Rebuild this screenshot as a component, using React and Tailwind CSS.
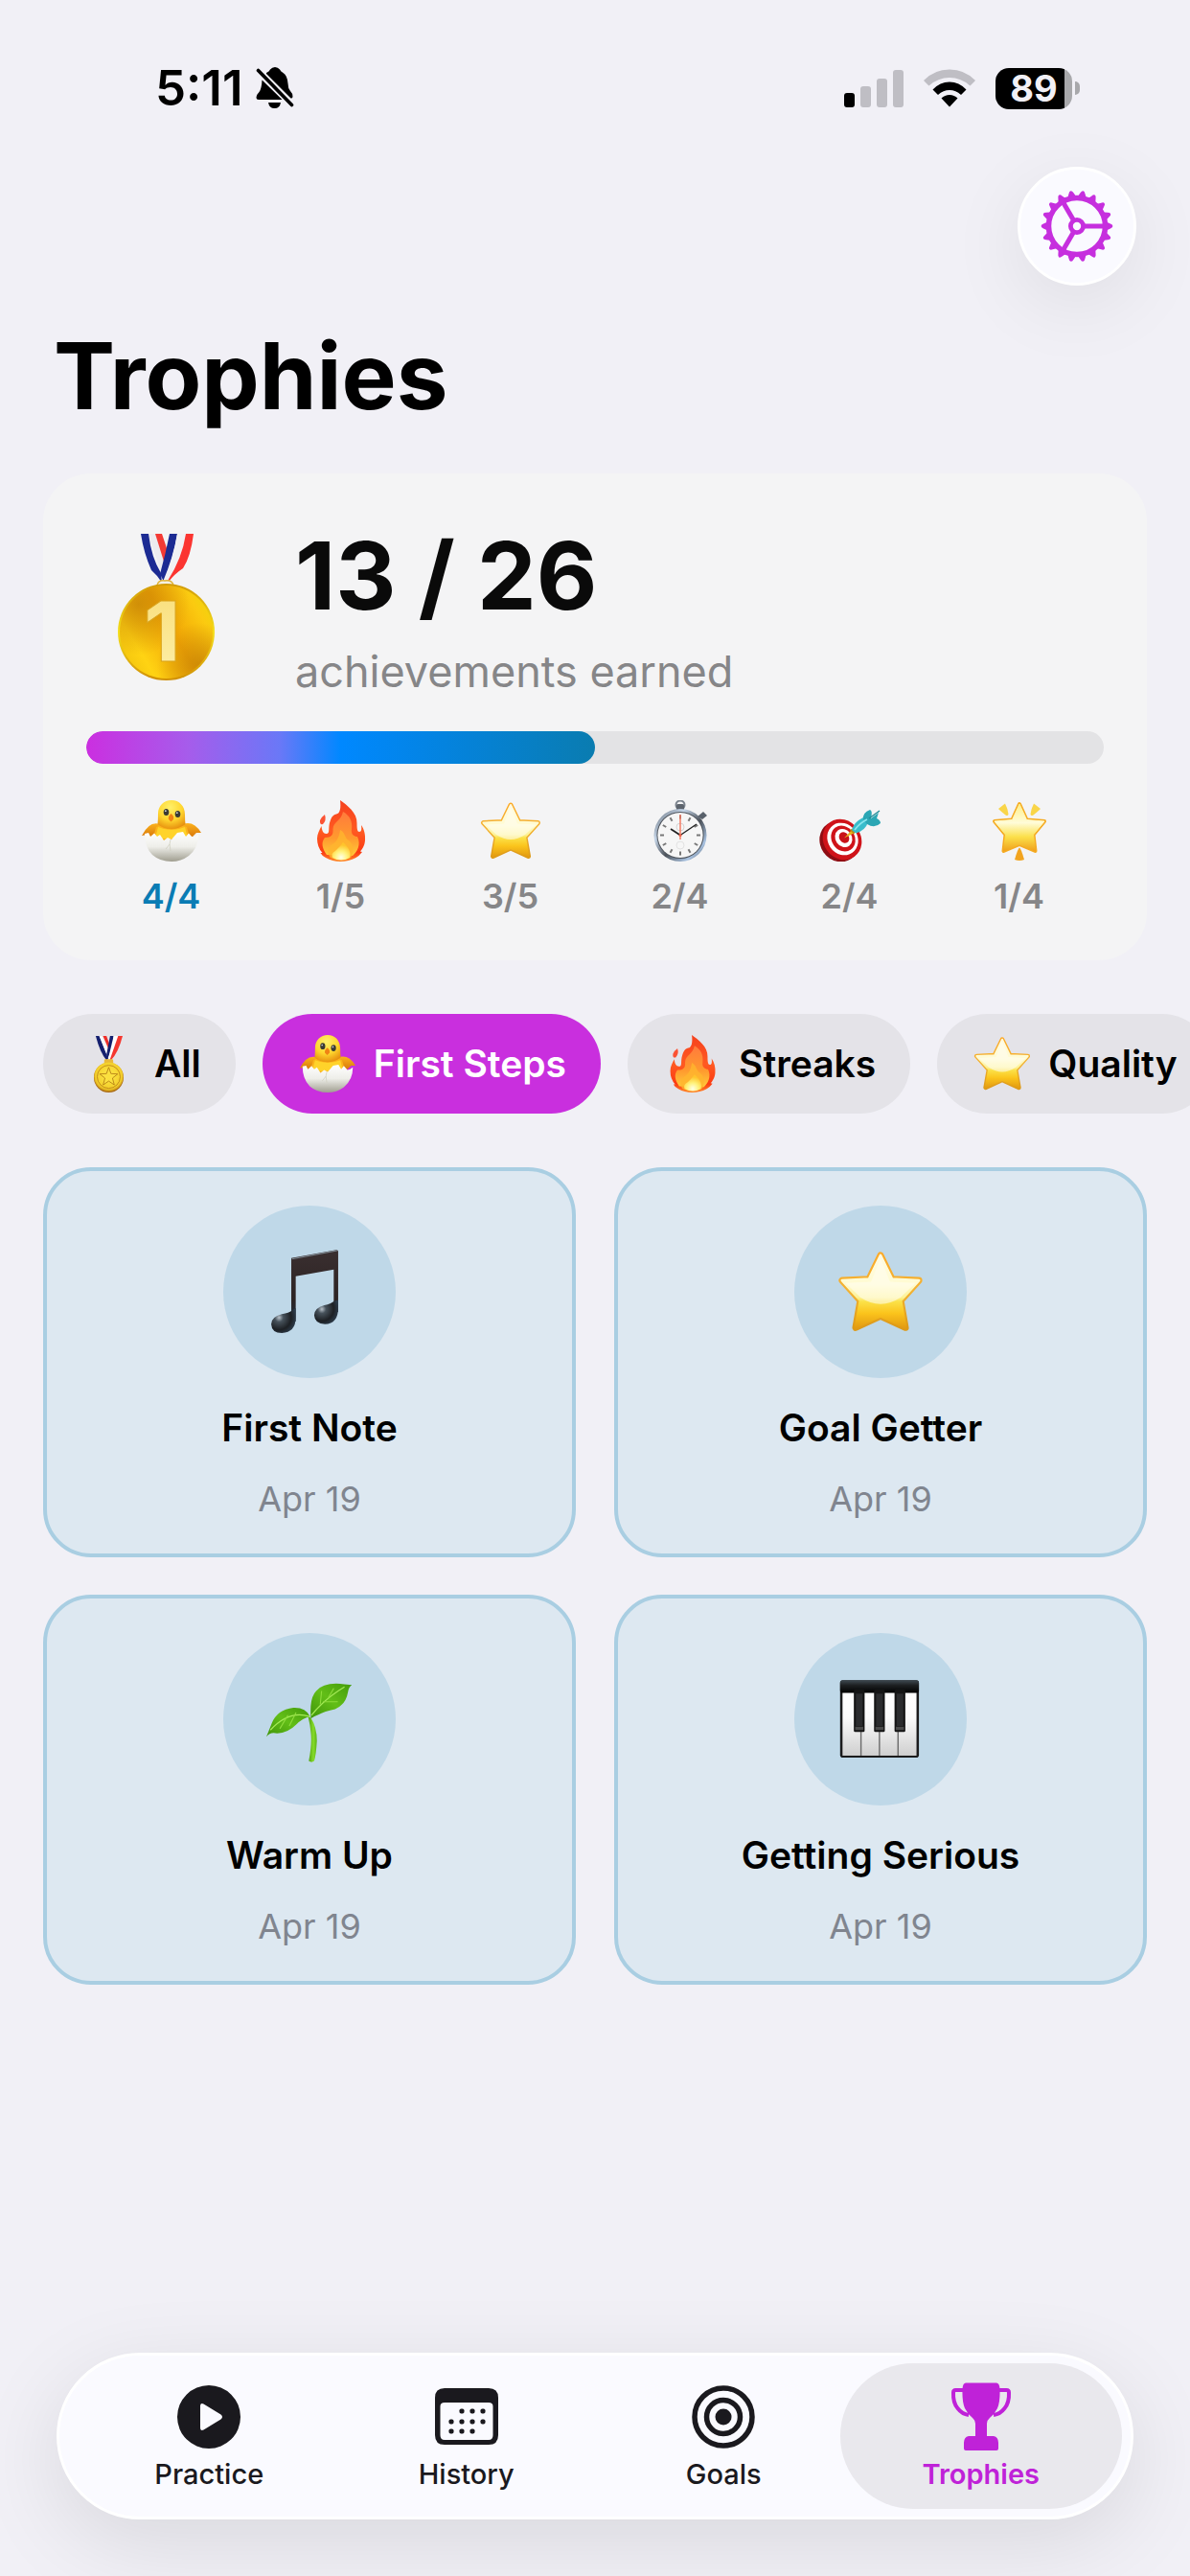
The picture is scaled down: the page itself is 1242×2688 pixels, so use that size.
import { useState } from "react";

const STAR = "M32 5 L40.5 22.5 L60.5 23.5 L47 38.5 L50.5 58.5 L32 50 L13.5 58.5 L17 38.5 L3.5 23.5 L23.5 22.5 Z";

function Star({ className }) {
    return (
        <svg viewBox="0 0 64 64" className={className} aria-hidden="true">
            <defs>
                <linearGradient id="starFill" x1="0" y1="0" x2="0" y2="1">
                    <stop offset="0" stopColor="#fffbe0" />
                    <stop offset=".4" stopColor="#fffbd2" />
                    <stop offset=".58" stopColor="#fdf296" />
                    <stop offset=".64" stopColor="#fbe148" />
                    <stop offset=".8" stopColor="#fbc41c" />
                    <stop offset="1" stopColor="#e39c12" />
                </linearGradient>
                <linearGradient id="starEdge" x1="0" y1="0" x2="0" y2="1">
                    <stop offset="0" stopColor="#fbaa28" />
                    <stop offset=".5" stopColor="#f2b233" />
                    <stop offset="1" stopColor="#dd9a18" />
                </linearGradient>
            </defs>
            <path d={STAR} fill="url(#starEdge)" stroke="url(#starEdge)" strokeWidth="5" strokeLinejoin="round" />
            <path d={STAR} fill="url(#starFill)" stroke="url(#starFill)" strokeWidth="2" strokeLinejoin="round" />
            <path d="M32 7 L39 24.5 L58 25.500 L47 36 Q32 46 17 36 L6 25.500 L25 24.5 Z" fill="#fffef0" opacity=".6" />
        </svg>
    );
}

function GlowStar({ className }) {
    return (
        <svg viewBox="0 0 64 64" className={className} aria-hidden="true">
            <defs>
                <linearGradient id="glowFill" x1="0" y1="0" x2="0" y2="1">
                    <stop offset="0" stopColor="#fff08a" />
                    <stop offset=".4" stopColor="#fffcd8" />
                    <stop offset=".7" stopColor="#fbe04a" />
                    <stop offset="1" stopColor="#f0a11c" />
                </linearGradient>
            </defs>
            <path d="M32 4 L39.5 20.500 L58 22 L46.500 36 L48.500 53 L32 46 L15.5 53 L17.500 36 L6 22 L24.500 20.500 Z" fill="#f5ab22" stroke="#f5ab22" strokeWidth="4" strokeLinejoin="round" />
            <path d="M32 4 L39.5 20.500 L58 22 L46.500 36 L48.500 53 L32 46 L15.5 53 L17.500 36 L6 22 L24.500 20.500 Z" fill="url(#glowFill)" stroke="url(#glowFill)" strokeWidth="1" strokeLinejoin="round" />
            <path d="M10 9 L17 3.500 Q19.500 8 20.500 14.500 Q20 17 17.500 15.500 Q13 12 10 9 Z" fill="#f9d548" />
            <path d="M54 9 L47 3.500 Q44.500 8 43.500 14.500 Q44 17 46.500 15.500 Q51 12 54 9 Z" fill="#f9d548" />
            <path d="M32 49.500 Q33.500 50 37 62 Q32 64 27 62 Q30.500 50 32 49.500 Z" fill="#f2a41f" />
        </svg>
    );
}

function Chick({ className }) {
    return (
        <svg viewBox="0 0 64 64" className={className} aria-hidden="true">
            <defs>
                <radialGradient id="chickHead" cx=".45" cy=".25" r=".8">
                    <stop offset="0" stopColor="#fff06a" />
                    <stop offset=".55" stopColor="#ffd62e" />
                    <stop offset="1" stopColor="#e58a0c" />
                </radialGradient>
                <linearGradient id="chickWing" x1="0" y1="0" x2="0" y2="1">
                    <stop offset="0" stopColor="#fcb21c" />
                    <stop offset="1" stopColor="#d9790b" />
                </linearGradient>
                <linearGradient id="shell" x1="0" y1="0" x2="0" y2="1">
                    <stop offset="0" stopColor="#ffffff" />
                    <stop offset=".5" stopColor="#eeeee9" />
                    <stop offset="1" stopColor="#a09e90" />
                </linearGradient>
            </defs>
            <path d="M20 25 Q9 21 1 37 L6 36 L10 38 L20 37 Z" fill="url(#chickWing)" />
            <path d="M44 25 Q55 21 63 34 L58 34 L54 38 L44 37 Z" fill="url(#chickWing)" />
            <path d="M16 28 Q32 20 48 28 L52 42 L12 42 Z" fill="#fbb41b" />
            <path d="M32 0 C40 0 46 6 46 15 Q46 21 46.500 25 Q40 30 32 30 Q23 30 17.500 25 Q18 20 18 14 C18 6 24 0 32 0 Z" fill="url(#chickHead)" />
            <path d="M18 28 Q32 34 46 28 L49 40 L15 40 Z" fill="#ffd32a" />
            <ellipse cx="26.500" cy="12.500" rx="2.800" ry="3.600" fill="#3a3a34" />
            <ellipse cx="38.500" cy="14.500" rx="2.800" ry="3.600" fill="#3a3a34" />
            <circle cx="25.800" cy="11.200" r=".9" fill="#cfd3da" />
            <circle cx="37.800" cy="13.200" r=".9" fill="#cfd3da" />
            <path d="M31.500 14 Q35 16.500 34 20 L31.500 22.500 L29 20 Q28 17 31.500 14 Z" fill="#f08314" />
            <path d="M4 35 L8 34 L10 38 L14 34.500 L17 38 L20 36 L24 42 L28 39 L32 41 L38 34 L44 33 L47 38 L50 34.500 L54 39 L57 38 L60 36 Q60 50 50 58 Q42 64 32 64 Q20 64 12 57 Q4 49 4 35 Z" fill="url(#shell)" />
            <path d="M31 41 L30 46 L26 51 M30 46 L31 53" fill="none" stroke="#cfcfc0" strokeWidth=".8" />
        </svg>
    );
}

function Fire({ className }) {
    return (
        <svg viewBox="0 0 64 64" className={className} aria-hidden="true">
            <defs>
                <linearGradient id="fireOuter" x1="0" y1="0" x2="0" y2="1">
                    <stop offset="0" stopColor="#f5401d" />
                    <stop offset=".5" stopColor="#ff5a22" />
                    <stop offset=".85" stopColor="#fb3b12" />
                    <stop offset="1" stopColor="#ff8a2a" />
                </linearGradient>
                <linearGradient id="fireMid" x1="0" y1="0" x2="0" y2="1">
                    <stop offset="0" stopColor="#ff7a3c" />
                    <stop offset=".6" stopColor="#ff9a2e" />
                    <stop offset="1" stopColor="#ffc93a" />
                </linearGradient>
                <radialGradient id="fireCore" cx=".5" cy=".85" r=".7">
                    <stop offset="0" stopColor="#ffffe6" />
                    <stop offset=".5" stopColor="#fff27a" />
                    <stop offset="1" stopColor="#ffc42c" />
                </radialGradient>
            </defs>
            <path d="M31 0 C38 5 49 13 48.500 24 C48.500 30 49 33 51 33 C53.500 33 53.500 30 53 26 C56 30 57.500 36 57 42 C56.500 48 54 51 52 53.500 L54 54 Q51 58 47.500 60 Q40 64 31 64 Q23 64 16 60 Q12 58 10.500 55 L12.500 55 Q7 49 7 40 C7 35 9.500 31 11.500 27 C12 32 13.500 35 16.500 35 C21 35 18 29 20.500 22 C22.500 16 25 15 27 14.500 C31 14 32 8 31 0 Z" fill="url(#fireOuter)" />
            <path d="M15 15 Q17 21 13 25 Q9.500 26 10 21 Q11 18 15 15 Z" fill="#fb5233" />
            <path d="M34 12 C41 16 44 22 43 30 C42 36 46 38 49 38 C53 46 49 54 44 58 L17 57 C12 50 11 44 15 39 C22 39 24 36 23.500 30 C24 22 32 22 34 12 Z" fill="url(#fireMid)" />
            <path d="M31 31 C36 33 36 40 40 42 C45 46 46 54 42 60 Q32 65 21 60 C16 54 19 48 23 46 C28 43 30 38 31 31 Z" fill="#ffb52e" opacity=".8" />
            <path d="M34 44 C39 48 43 54 41 60 Q32 65 23 60 C21 55 25 54 27 52 C30 49 31 48 34 44 Z" fill="url(#fireCore)" />
        </svg>
    );
}

function Stopwatch({ className }) {
    const ticks = [0, 30, 60, 90, 120, 150, 180, 210, 240, 270, 300, 330];
    return (
        <svg viewBox="0 0 64 64" className={className} aria-hidden="true">
            <defs>
                <linearGradient id="steel" x1="0" y1="0" x2="1" y2="1">
                    <stop offset="0" stopColor="#5f6873" />
                    <stop offset=".3" stopColor="#c5d5e8" />
                    <stop offset=".55" stopColor="#4c525a" />
                    <stop offset=".8" stopColor="#a9c3e2" />
                    <stop offset="1" stopColor="#3f444b" />
                </linearGradient>
            </defs>
            <circle cx="32" cy="5" r="4.500" fill="none" stroke="#7b838d" strokeWidth="2" />
            <rect x="28" y="4" width="8" height="7" rx="1.500" fill="#5d646d" />
            <path d="M50 17 L56 12 L60 16 L55 20 Z" fill="#59616b" />
            <circle cx="32" cy="36.500" r="27.500" fill="url(#steel)" />
            <circle cx="32" cy="36.500" r="24.600" fill="#4f555d" />
            <circle cx="32" cy="36.500" r="23.600" fill="#f6f6f6" />
            {ticks.map((a) => (
                <rect key={a} x="31" y="15.500" width="2" height="4" fill="#777" transform={`rotate(${a} 32 36.500)`} />
            ))}
            <circle cx="32" cy="28" r="4" fill="none" stroke="#ccc" strokeWidth=".8" />
            <circle cx="32" cy="47" r="4" fill="none" stroke="#ddd" strokeWidth=".8" />
            <path d="M32 36.500 L22 30" stroke="#222" strokeWidth="1.800" />
            <path d="M32 36.500 L49 25" stroke="#222" strokeWidth="1.400" />
            <path d="M32 41 L32 15" stroke="#f4745c" strokeWidth="1.400" />
            <circle cx="32" cy="36.500" r="1.600" fill="#e7664e" />
        </svg>
    );
}

function Dart({ className }) {
    return (
        <svg viewBox="0 0 64 64" className={className} aria-hidden="true">
            <ellipse cx="21" cy="43" rx="20" ry="22" fill="#8e0d13" transform="rotate(-35 21 43)" />
            <ellipse cx="24" cy="41" rx="19.500" ry="22" fill="#cf1319" transform="rotate(-35 24 41)" />
            <ellipse cx="24.500" cy="40.500" rx="15.500" ry="17.500" fill="#fff" transform="rotate(-35 24.500 40.500)" />
            <ellipse cx="25" cy="40" rx="12" ry="14" fill="#cf1319" transform="rotate(-35 25 40)" />
            <ellipse cx="25.500" cy="39.500" rx="8.500" ry="10" fill="#fff" transform="rotate(-35 25.500 39.500)" />
            <ellipse cx="26" cy="39" rx="5" ry="6" fill="#c81218" transform="rotate(-35 26 39)" />
            <path d="M26 39.500 L34 31 L37 34 Z" fill="#e8b21d" />
            <path d="M32 31 L36 35.500 L38 33 L34.500 29.500 Z" fill="#b98a12" />
            <path d="M34 31 Q36 23 46 18 L51 23 Q48 32 38 34.500 Z" fill="#39bccb" />
            <path d="M46 20 Q45 13 53 10 Q56 11 54 19 L62 13 L60 19 Q64 21 64 24 Q58 30 50 25 Z" fill="#2ba6b4" />
            <path d="M37 31 Q42 24 50 20" stroke="#8ae6ee" strokeWidth="1.800" fill="none" />
            <path d="M52 19 L63 11" stroke="#1f8a96" strokeWidth="1.200" />
        </svg>
    );
}

function SportsMedal({ className }) {
    return (
        <svg viewBox="0 0 64 64" className={className} aria-hidden="true">
            <defs>
                <radialGradient id="smallGold" cx=".5" cy=".45" r=".6">
                    <stop offset="0" stopColor="#ffe94a" />
                    <stop offset=".75" stopColor="#f3cf2b" />
                    <stop offset="1" stopColor="#b9790f" />
                </radialGradient>
            </defs>
            <path d="M24 1 L29 1 L37 24 L33 27 Z" fill="#f5f5f5" />
            <path d="M26 1 L30 1 L34 12 L33 17 Z" fill="#ee2f2a" />
            <path d="M18 1 L22 1 L32 26 L30 28 Q23 20 18 1 Z" fill="#15206f" />
            <path d="M22 1 L24 1 L33 23 L32 26 Z" fill="#fff" />
            <path d="M34 1 L38 1 Q37 15 31 27 L30 22 Z" fill="#15206f" />
            <path d="M38 1 L43 1 Q40 17 33 27 L32 26 Z" fill="#fff" />
            <path d="M43 1 L48 1 Q43 20 35 28 L34 27 Z" fill="#f5372f" />
            <rect x="27.500" y="27" width="10" height="5" rx="1.500" fill="#e9b93a" />
            <circle cx="32.500" cy="47.500" r="16.500" fill="#a96a13" />
            <circle cx="32.500" cy="46.500" r="16.200" fill="url(#smallGold)" />
            <circle cx="32.500" cy="46.500" r="12.800" fill="none" stroke="#c08a1a" strokeWidth="1" />
            <path d="M32.500 36 L35 43 L42.500 43.400 L36.700 48 L38.700 55.500 L32.500 51.300 L26.300 55.500 L28.300 48 L22.500 43.400 L30 43 Z" fill="#fbe03f" stroke="#b98417" strokeWidth="1" strokeLinejoin="round" />
        </svg>
    );
}

function GoldMedal({ className }) {
    return (
        <svg viewBox="0 0 101 153" className={className} aria-hidden="true">
            <defs>
                <linearGradient id="gold" x1="0" y1=".8" x2="1" y2=".2">
                    <stop offset="0" stopColor="#f2c30d" />
                    <stop offset=".2" stopColor="#ffd313" />
                    <stop offset=".55" stopColor="#f2a505" />
                    <stop offset=".85" stopColor="#fbca10" />
                    <stop offset="1" stopColor="#f0d60c" />
                </linearGradient>
                <linearGradient id="goldRim" x1="0" y1="0" x2="0" y2="1">
                    <stop offset="0" stopColor="#d19a06" />
                    <stop offset=".5" stopColor="#f4df1c" />
                    <stop offset="1" stopColor="#d08f05" />
                </linearGradient>
                <radialGradient id="goldShade" cx=".2" cy=".2" r=".55">
                    <stop offset="0" stopColor="#c48206" stopOpacity=".75" />
                    <stop offset="1" stopColor="#c48206" stopOpacity="0" />
                </radialGradient>
                <radialGradient id="goldShade2" cx=".85" cy=".85" r=".45">
                    <stop offset="0" stopColor="#c48206" stopOpacity=".75" />
                    <stop offset="1" stopColor="#c48206" stopOpacity="0" />
                </radialGradient>
                <linearGradient id="numeral" x1="0" y1="0" x2="0" y2="1">
                    <stop offset="0" stopColor="#f9dd78" />
                    <stop offset="1" stopColor="#fdf0aa" />
                </linearGradient>
            </defs>
            <path d="M38 0 L46 0 L56 30 L49 40 Z" fill="#f43a34" />
            <path d="M31 0 L39 0 L49 32 L47 44 Z" fill="#ececf0" />
            <path d="M24 0 L32 0 Q35 25 45 41 L46 51 Q41 43 35 38 Q27 20 24 0 Z" fill="#1c2b93" />
            <path d="M54 0 L62 0 Q58 25 48 50 L44 42 Q50 20 54 0 Z" fill="#1c2b93" />
            <path d="M62 0 L71 0 Q66 28 52 50 L47 50 Q58 24 62 0 Z" fill="#f1f1f4" />
            <path d="M71 0 L79 0 Q76 24 68 36 Q59 42 53 50 L52 49 Q67 26 71 0 Z" fill="#fb3531" />
            <path d="M41 54 Q42 48 49 49 Q57 48 58 54 Z" fill="#f5f1e6" stroke="#e0b53a" strokeWidth="1.500" />
            <circle cx="50.500" cy="102.500" r="50.500" fill="url(#goldRim)" />
            <circle cx="50.500" cy="102.500" r="48.500" fill="url(#gold)" />
            <circle cx="50.500" cy="102.500" r="48.500" fill="url(#goldShade)" />
            <circle cx="50.500" cy="102.500" r="48.500" fill="url(#goldShade2)" />
            <text x="46" y="133" textAnchor="middle" fontFamily="Inter, sans-serif" fontWeight="800" fontSize="86" fill="url(#numeral)" stroke="#d9a41c" strokeWidth="1">1</text>
        </svg>
    );
}

function MusicNotes({ className }) {
    return (
        <svg viewBox="0 0 64 64" className={className} aria-hidden="true">
            <defs>
                <linearGradient id="beam" x1="0" y1="0" x2="0" y2="1">
                    <stop offset="0" stopColor="#3a2f30" />
                    <stop offset=".7" stopColor="#2c2323" />
                    <stop offset="1" stopColor="#1f2f40" />
                </linearGradient>
                <radialGradient id="noteHead" cx=".32" cy=".38" r=".7">
                    <stop offset="0" stopColor="#b9c2ca" />
                    <stop offset=".25" stopColor="#47525b" />
                    <stop offset=".7" stopColor="#1d2024" />
                    <stop offset="1" stopColor="#2c3b4a" />
                </radialGradient>
            </defs>
            <path d="M18.500 7 L52 .8 Q53.300 .8 53.300 2 L53.300 47 L50 47 L50 15.500 L21.800 20.500 L21.800 54 L18.500 54 Z" fill="url(#beam)" />
            <path d="M19 7.600 L52.500 1.300" stroke="#7d8790" strokeWidth=".8" />
            <path d="M18.700 46 Q17 47.500 11.500 48.500 Q3.600 50.500 3.600 56 Q4 62.600 11.500 62.600 Q21.800 62 21.800 51 L21.800 44 Z" fill="url(#noteHead)" />
            <path d="M50.200 39 Q48 41 43 42 Q35.500 44 35.500 49.500 Q36 56 43.500 56 Q53.300 55.500 53.300 44 L53.300 38 Z" fill="url(#noteHead)" />
        </svg>
    );
}

function Seedling({ className }) {
    return (
        <svg viewBox="0 0 64 64" className={className} aria-hidden="true">
            <defs>
                <linearGradient id="leaf" x1="0" y1="1" x2="1" y2="0">
                    <stop offset="0" stopColor="#3f9409" />
                    <stop offset=".5" stopColor="#62be17" />
                    <stop offset="1" stopColor="#439b0b" />
                </linearGradient>
                <linearGradient id="stem" x1="0" y1="0" x2="1" y2="0">
                    <stop offset="0" stopColor="#4a9c0e" />
                    <stop offset=".6" stopColor="#86db2a" />
                    <stop offset="1" stopColor="#5cb316" />
                </linearGradient>
            </defs>
            <path d="M33 31 Q37.500 38 37.500 48 Q37 58 35.500 63 Q33.500 64.500 31.500 63 Q34 50 33 42 Q32.500 36 31 30 Z" fill="url(#stem)" />
            <path d="M32.500 30 Q29 23 20 23.500 Q8 25 4 35 Q2 40 0 45 Q3 41 8 42.500 Q16 42 22 36 Q27 31 32.500 30 Z" fill="url(#leaf)" />
            <path d="M33 30 Q32 16 37 11 Q43 4 58 6 L63.500 6.500 Q61 8 60.500 12 Q59 21 51 24.500 Q43 26 39 28.500 Q35 30 33 31.500 Z" fill="url(#leaf)" />
            <path d="M32 30 Q17 25 3 40" fill="none" stroke="#a5ea57" strokeWidth=".9" />
            <path d="M33.500 29 Q43 17 58 8" fill="none" stroke="#a5ea57" strokeWidth=".9" />
            <path d="M22 27 L17 37 M16 29 L10 39 M40 21 L41 11 M46 16 L50 9 M42 19 L53 19" fill="none" stroke="#8edc3c" strokeWidth=".8" />
        </svg>
    );
}

function Piano({ className }) {
    return (
        <svg viewBox="0 0 64 64" className={className} aria-hidden="true">
            <defs>
                <linearGradient id="ivory" x1="0" y1="0" x2="0" y2="1">
                    <stop offset="0" stopColor="#ffffff" />
                    <stop offset=".4" stopColor="#fbfbfb" />
                    <stop offset="1" stopColor="#cfcfcf" />
                </linearGradient>
                <linearGradient id="lid" x1="0" y1="0" x2="0" y2="1">
                    <stop offset="0" stopColor="#3f4a52" />
                    <stop offset=".4" stopColor="#1d2022" />
                    <stop offset="1" stopColor="#000" />
                </linearGradient>
            </defs>
            <rect x="2" y="3" width="58.500" height="57.500" rx="2" fill="#1b1b1c" />
            <rect x="3.800" y="12" width="54.900" height="47" fill="url(#ivory)" />
            <path d="M17.500 12 V59 M31.200 12 V59 M45 12 V59" stroke="#6b6b6b" strokeWidth="1" />
            <rect x="2" y="3" width="58.500" height="9.500" rx="2" fill="url(#lid)" />
            {[12.200, 27.200, 42.400].map((x) => (
                <g key={x}>
                    <rect x={x} y="10" width="8" height="31.500" rx="1" fill="#141414" />
                    <rect x={x + 1.5} y="13" width="5" height="24" fill="#2b2c2e" />
                    <rect x={x + 1} y="37.500" width="6" height="2.500" fill="#4a4a4a" />
                </g>
            ))}
        </svg>
    );
}

function Gear() {
    const teeth = Array.from({ length: 18 }, (_, i) => i * 20);
    return (
        <svg viewBox="-38 -38 76 76" className="size-[76px]" aria-hidden="true">
            {teeth.map((a) => (
                <path key={a} d="M28 -5.500 Q31 -4.500 35 -2.400 Q37.400 -1.500 37.400 0 Q37.400 1.500 35 2.400 Q31 4.500 28 5.500 Z" fill="#c62fde" transform={`rotate(${a})`} />
            ))}
            <circle r="29.500" fill="none" stroke="#c62fde" strokeWidth="5.500" />
            <circle r="6.600" fill="none" stroke="#c62fde" strokeWidth="4.800" />
            {[0, 120, 240].map((a) => (
                <path key={a} d="M8 0 H29" stroke="#c62fde" strokeWidth="5" transform={`rotate(${a})`} />
            ))}
        </svg>
    );
}

function StatusBar() {
    return (
        <div className="flex h-[60px] items-center justify-between pl-[162px] pr-[115px]">
            <div className="flex items-center gap-[14px]">
                <span className="text-[51px] font-semibold leading-[60px] text-black">5:11</span>
                <svg viewBox="0 0 40 44" className="h-[44px] w-[40px]" aria-label="Silent mode">
                    <path d="M11 6 Q14 4.500 15 2.500 Q17 0 20 0 Q23 0 25 2.500 Q26 4.500 28.500 6 Q33 9 33.500 17 Q33.500 22 36 25 Q39 28 38.500 31 Q38 33 36.500 32.500 L11 7 Z" />
                    <path d="M6.500 13.500 L27.500 34 L3 34 Q.5 34 .5 31.500 Q.5 29 3.500 26 Q6 23 6.500 13.500 Z" />
                    <path d="M13 37 H26 Q25 43 19.500 43 Q14 43 13 37 Z" />
                    <path d="M2.500 3.500 L37.500 39.500" stroke="#000" strokeWidth="3.600" strokeLinecap="round" />
                </svg>
            </div>
            <div className="flex items-center gap-[21px]">
                <svg viewBox="0 0 62 40" className="h-[40px] w-[62px]" aria-label="Signal">
                    <rect x="0" y="25" width="11" height="15" rx="3" fill="#000" />
                    <rect x="17" y="18" width="11" height="22" rx="3" fill="#bfbec4" />
                    <rect x="34" y="10" width="11" height="30" rx="3" fill="#bfbec4" />
                    <rect x="51" y="1" width="11" height="39" rx="3" fill="#bfbec4" />
                </svg>
                <svg viewBox="0 0 54 40" className="h-[40px] w-[54px]" aria-label="Wi-Fi">
                    <path d="M0 12 Q11 .5 27 .5 Q43 .5 54 12 L48.500 17.500 Q39 9 27 9 Q15 9 5.500 17.500 Z" fill="#bfbec4" />
                    <path d="M9.500 21.500 Q17 13.500 27 13.500 Q37 13.500 44.500 21.500 L39 27 Q33.500 22 27 22 Q20.500 22 15 27 Z" />
                    <path d="M18.500 30.500 Q22 27 27 27 Q32 27 35.500 30.500 L27 39.500 Z" />
                </svg>
                <div className="flex items-center gap-[3px]">
                    <div className="flex h-[43px] w-[80px] items-center justify-center rounded-[14px] bg-linear-to-r from-black from-90% to-[#a8a8ab] to-90% text-[38px] font-bold leading-[43px] text-[#f1f0f6]">89</div>
                    <div className="h-[14px] w-[5px] rounded-r-full bg-[#a8a8ab]"></div>
                </div>
            </div>
        </div>
    );
}

const categories = [
    { name: "First Steps", icon: Chick, earned: 4, total: 4 },
    { name: "Streaks", icon: Fire, earned: 1, total: 5 },
    { name: "Quality", icon: Star, earned: 3, total: 5 },
    { name: "Time", icon: Stopwatch, earned: 2, total: 4 },
    { name: "Goals", icon: Dart, earned: 2, total: 4 },
    { name: "Special", icon: GlowStar, earned: 1, total: 4 },
];

const filters = [{ name: "All", icon: SportsMedal }, ...categories.slice(0, 3)];

const trophies = [
    { name: "First Note", date: "Apr 19", icon: MusicNotes },
    { name: "Goal Getter", date: "Apr 19", icon: Star },
    { name: "Warm Up", date: "Apr 19", icon: Seedling },
    { name: "Getting Serious", date: "Apr 19", icon: Piano },
];

function PlayIcon() {
    return (
        <svg viewBox="0 0 72 72" className="size-[72px]" fill="currentColor" aria-hidden="true">
            <path fillRule="evenodd" d="M36 3 A33 33 0 1 1 36 69 A33 33 0 1 1 36 3 Z M27 25 V47 Q27 51 30.500 49.500 L48.500 38.500 Q51.500 36 48.500 33.500 L30.500 22.500 Q27 21 27 25 Z" />
        </svg>
    );
}

function CalendarIcon() {
    const dots = [[29, 30], [40, 30], [51, 30], [18, 41], [29, 41], [40, 41], [51, 41], [18, 51], [29, 51], [40, 51]];
    return (
        <svg viewBox="0 0 72 72" className="size-[72px]" fill="currentColor" aria-hidden="true">
            <path fillRule="evenodd" d="M13 6 H59 Q69 6 69 16 V55 Q69 65 59 65 H13 Q3 65 3 55 V16 Q3 6 13 6 Z M13 21 Q8.500 21 8.500 25 V55 Q8.500 60 13 60 H59 Q63.500 60 63.500 55 V25 Q63.500 21 59 21 Z" />
            {dots.map(([x, y]) => (
                <rect key={x + "-" + y} x={x - .5} y={y - 2.5} width="5" height="5" rx="1.800" />
            ))}
        </svg>
    );
}

function TargetIcon() {
    return (
        <svg viewBox="0 0 72 72" className="size-[72px]" aria-hidden="true">
            <circle cx="36" cy="36" r="30" fill="none" stroke="currentColor" strokeWidth="5.500" />
            <circle cx="36" cy="36" r="17.500" fill="none" stroke="currentColor" strokeWidth="5.500" />
            <circle cx="36" cy="36" r="8.500" fill="currentColor" />
        </svg>
    );
}

function TrophyIcon() {
    return (
        <svg viewBox="0 0 72 72" className="size-[72px]" fill="currentColor" aria-hidden="true">
            <path d="M20 .5 H52 Q55 .5 55.500 6.500 Q56 20 53 27 Q50 33 45 37 Q42 39.500 42 43 V56 H49 Q54 57 54 63 V69 Q54 71 52 71 H20 Q18 71 18 69 V63 Q18 57 23 56 H30 V43 Q30 39.500 27 37 Q22 33 19 27 Q16 20 16.500 6.500 Q17 .5 20 .5 Z" />
            <path d="M17 8 H9.500 Q7 8 7 10.500 Q6.500 21 11.500 27 Q16 33 23 34" fill="none" stroke="currentColor" strokeWidth="4" />
            <path d="M55 8 H62.500 Q65 8 65 10.500 Q65.500 21 60.500 27 Q56 33 49 34" fill="none" stroke="currentColor" strokeWidth="4" />
        </svg>
    );
}

const tabs = [
    { name: "Practice", icon: PlayIcon },
    { name: "History", icon: CalendarIcon },
    { name: "Goals", icon: TargetIcon },
    { name: "Trophies", icon: TrophyIcon },
];

function SummaryCard() {
    const earned = 13;
    const total = 26;

    return (
        <section className="mx-[45px] mt-[42px] rounded-[50px] bg-[#f4f4f5] px-[45px] pb-[43px] pt-[63px]">
            <div className="flex pl-[33px]">
                <GoldMedal className="h-[153px] w-[101px]" />
                <div className="ml-[84px] flex flex-col gap-[28px]">
                    <p className="text-[98px] font-bold leading-[88px] text-[#0a0a0a]">{earned} / {total}</p>
                    <p className="text-[45px] leading-[56px] text-[#868688]">achievements earned</p>
                </div>
            </div>

            <div className="mt-[34px] h-[34px] overflow-hidden rounded-full bg-[#e3e3e5]">
                <div
                    className="h-full rounded-full bg-[linear-gradient(90deg,#cb2fe0_0%,#a65ceb_20%,#6a78f7_38%,#0088ff_50%,#0a7cb0_100%)]"
                    style={{ width: `${(earned / total) * 100}%` }}
                ></div>
            </div>

            <ul className="mt-[38px] grid grid-cols-6">
                {categories.map((c) => (
                    <li key={c.name} className="flex flex-col items-center gap-[12px]">
                        <c.icon className="size-[64px]" />
                        <span className={c.earned === c.total ? "text-[36px] font-semibold leading-[48px] text-[#0a7cb4]" : "text-[36px] font-semibold leading-[48px] text-[#868688]"}>
                            {c.earned}/{c.total}
                        </span>
                    </li>
                ))}
            </ul>
        </section>
    );
}

function App() {
    const [filter, setFilter] = useState("First Steps");
    const [tab, setTab] = useState("Trophies");

    return (
        <div className="flex min-h-screen flex-col overflow-x-hidden bg-[#f1f0f6] pt-[62px] font-['Inter',sans-serif]">
            <StatusBar />

            <header className="mt-[52px]">
                <div className="flex justify-end pr-[56px]">
                    <button aria-label="Settings" className="flex size-[124px] items-center justify-center rounded-full border-[3px] border-white bg-[#fafaff] shadow-[0_20px_80px_rgba(0,0,0,0.08)]">
                        <Gear />
                    </button>
                </div>
                <h1 className="mt-[34px] px-[56px] text-[96px] font-bold leading-[120px] text-black">Trophies</h1>
            </header>

            <main>
                <SummaryCard />

                <div className="mt-[56px] flex gap-[28px] overflow-x-auto px-[45px] [scrollbar-width:none]">
                    {filters.map((f) => (
                        <button
                            key={f.name}
                            onClick={() => setFilter(f.name)}
                            className={
                                filter === f.name
                                    ? "flex h-[104px] shrink-0 items-center gap-[18px] rounded-full bg-[#c92fde] pl-[38px] pr-[36px] text-[39px] font-semibold text-white"
                                    : "flex h-[104px] shrink-0 items-center gap-[18px] rounded-full bg-[#e4e3e8] pl-[38px] pr-[36px] text-[39px] font-semibold text-black"
                            }
                        >
                            <f.icon className="size-[60px]" />
                            {f.name}
                        </button>
                    ))}
                </div>

                <div className="mx-[45px] mt-[56px] grid grid-cols-2 gap-x-[40px] gap-y-[39px]">
                    {trophies.map((t) => (
                        <article key={t.name} className="flex flex-col items-center rounded-[50px] border-4 border-[#a9cee2] bg-[#dde8f1] pb-[33px] pt-[36px]">
                            <div className="flex size-[180px] items-center justify-center rounded-full bg-[#bfd8e8]">
                                <t.icon className="size-[90px]" />
                            </div>
                            <h2 className="mt-[26px] text-[39px] font-semibold leading-[52px] text-black">{t.name}</h2>
                            <p className="mt-[24px] text-[36px] leading-[48px] text-[#80858f]">{t.date}</p>
                        </article>
                    ))}
                </div>
            </main>

            <div className="mt-auto px-[59px] pb-[59px]">
                <nav className="grid grid-cols-4 rounded-full border-[3px] border-white bg-[#fafaff] px-[22px] py-[8px] shadow-[0_24px_90px_rgba(0,0,0,0.1)]">
                    {tabs.map((t) => (
                        <button
                            key={t.name}
                            onClick={() => setTab(t.name)}
                            className={
                                tab === t.name
                                    ? "-mx-[13px] flex flex-col items-center gap-[6px] rounded-full bg-[#e9e8ed] pb-[18px] pt-[20px] font-semibold text-[#bf22d8]"
                                    : "-mx-[13px] flex flex-col items-center gap-[6px] rounded-full pb-[18px] pt-[20px] font-medium text-[#1a191e]"
                            }
                        >
                            <t.icon />
                            <span className="text-[29px] leading-[36px]">{t.name}</span>
                        </button>
                    ))}
                </nav>
            </div>
        </div>
    );
}

export default App;
